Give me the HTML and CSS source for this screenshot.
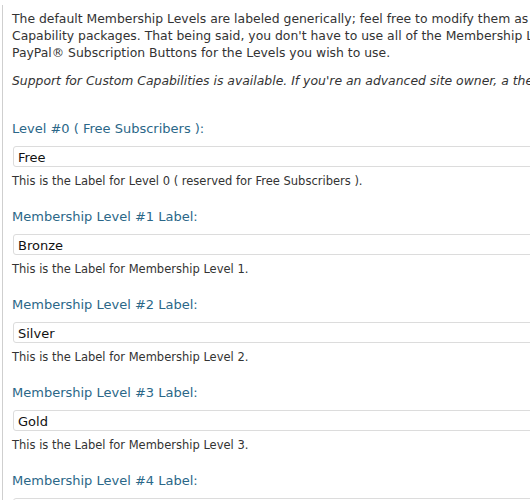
FILE: index.html
```html
<!DOCTYPE html>
<html>
<head>
<meta charset="utf-8">
<link rel="stylesheet" href="styles.css">
</head>
<body>
<div class="panel">
  <p class="intro">The default Membership Levels are labeled generically; feel free to modify them as needed. s2Member supports Free Subscribers<br>Capability packages. That being said, you don't have to use all of the Membership Levels if you don't want to. To use only 1 or 2 of<br>PayPal® Subscription Buttons for the Levels you wish to use.</p>
  <p class="note"><em>Support for Custom Capabilities is available. If you're an advanced site owner, a theme designer, or a developer integrating s2Member.</em></p>

  <div class="field">
    <label class="field-label" for="l0">Level #0 ( Free Subscribers ):</label>
    <input class="field-input" id="l0" type="text" value="Free">
    <div class="field-desc">This is the Label for Level 0 ( reserved for Free Subscribers ).</div>
  </div>
  <div class="field">
    <label class="field-label" for="l1">Membership Level #1 Label:</label>
    <input class="field-input" id="l1" type="text" value="Bronze">
    <div class="field-desc">This is the Label for Membership Level 1.</div>
  </div>
  <div class="field">
    <label class="field-label" for="l2">Membership Level #2 Label:</label>
    <input class="field-input" id="l2" type="text" value="Silver">
    <div class="field-desc">This is the Label for Membership Level 2.</div>
  </div>
  <div class="field">
    <label class="field-label" for="l3">Membership Level #3 Label:</label>
    <input class="field-input" id="l3" type="text" value="Gold">
    <div class="field-desc">This is the Label for Membership Level 3.</div>
  </div>
  <div class="field">
    <label class="field-label" for="l4">Membership Level #4 Label:</label>
    <input class="field-input" id="l4" type="text" value="Platinum">
    <div class="field-desc">This is the Label for Membership Level 4.</div>
  </div>
</div>
</body>
</html>
```

FILE: styles.css
```css
html, body {
  margin: 0;
  padding: 0;
  background: #fff;
  overflow: hidden;
}
body {
  width: 530px;
  height: 500px;
  font-family: "DejaVu Sans", Verdana, sans-serif;
  color: #333;
}
.panel {
  margin: 5px 0 0 2px;
  width: 900px;
  border-left: 1px solid #cfcfcf;
  padding: 5px 0 0 9px;
  min-height: 600px;
}
.intro {
  margin: 0;
  font-size: 12.4px;
  line-height: 17px;
  white-space: nowrap;
}
.note {
  margin: 11px 0 0;
  font-size: 12.4px;
  line-height: 17px;
  white-space: nowrap;
}
.note em {
  font-style: italic;
}
.field {
  display: flex;
  flex-direction: column;
  margin-bottom: 20px;
}
.note + .field {
  margin-top: 31px;
}
.field-label {
  font-size: 13px;
  line-height: 17px;
  color: #2b6788;
  margin-bottom: 9px;
}
.field-input {
  box-sizing: border-box;
  margin: 0 0 0 1px;
  width: 800px;
  height: 21px;
  padding: 1px 4px 0;
  border: 1px solid #dcdcdc;
  border-radius: 3px;
  font-family: "DejaVu Sans", Verdana, sans-serif;
  font-size: 13px;
  color: #111;
  background: #fff;
  outline: none;
}
.field-desc {
  margin-top: 7px;
  font-size: 11.5px;
  line-height: 14px;
  color: #333;
}
```
